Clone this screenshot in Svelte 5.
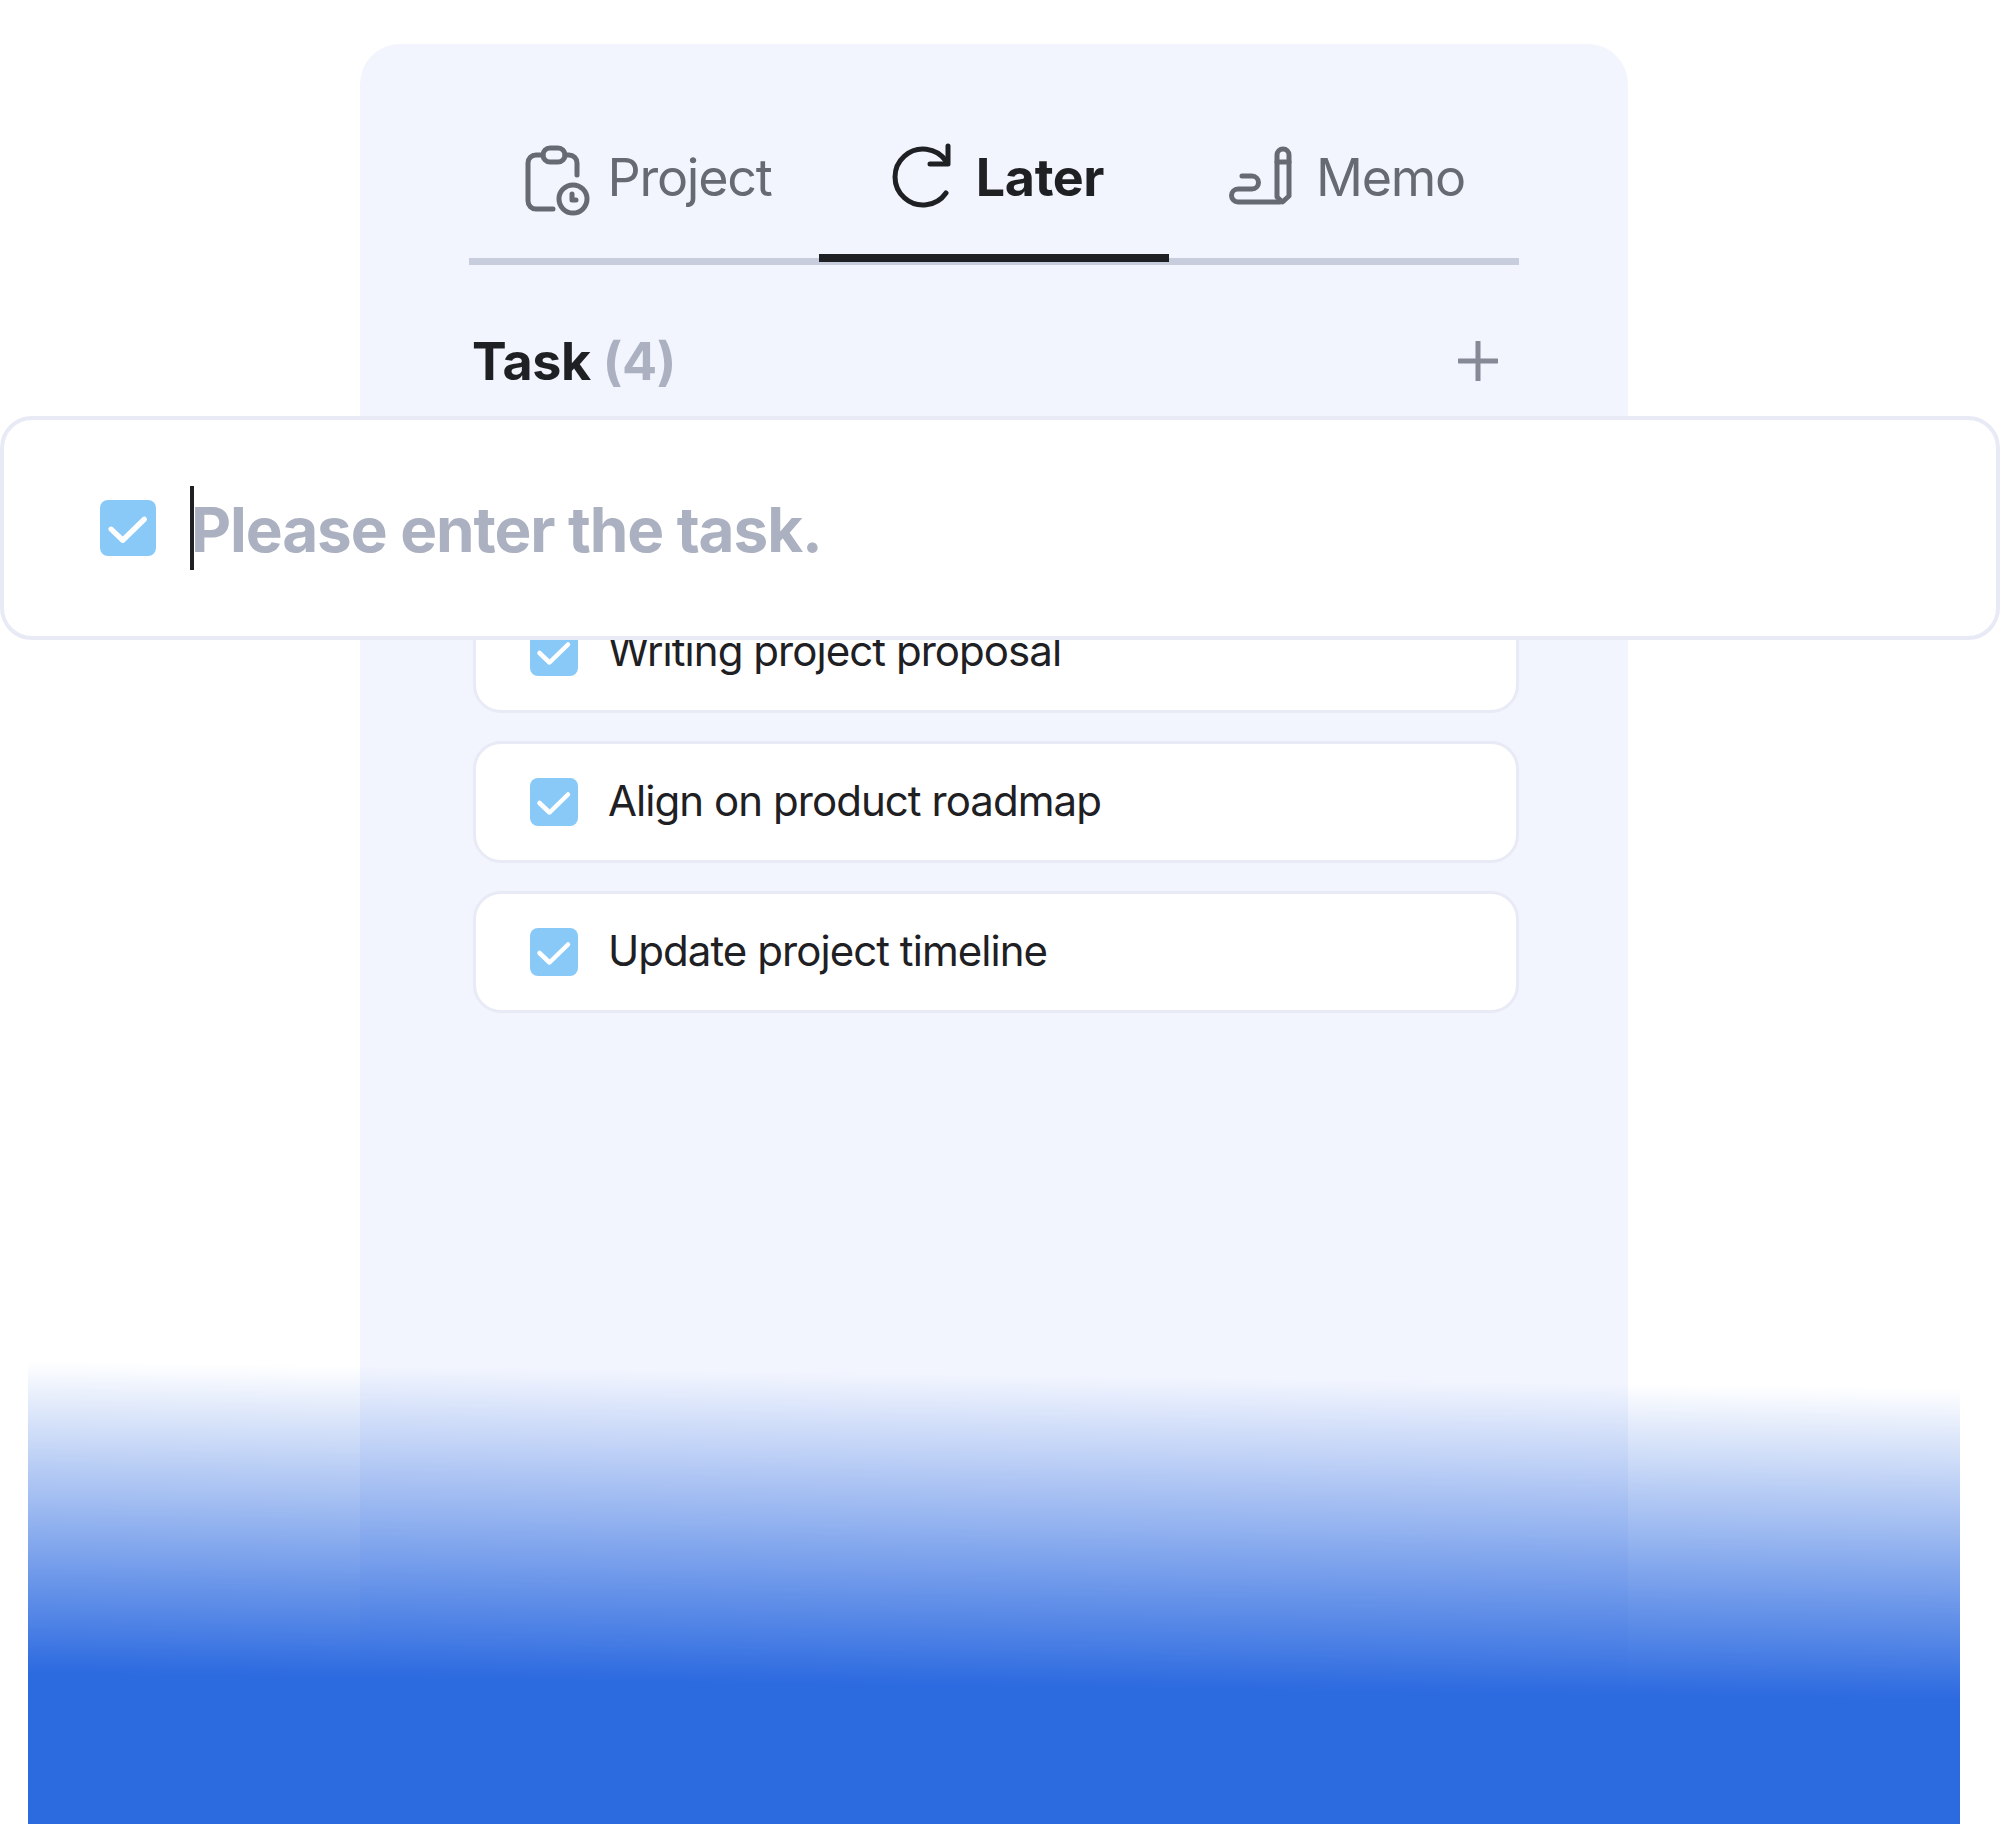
<script>
  const tabs = [
    { id: 'project', label: 'Project' },
    { id: 'later', label: 'Later', active: true },
    { id: 'memo', label: 'Memo' }
  ]
  const tasks = [
    'Writing project proposal',
    'Align on product roadmap',
    'Update project timeline'
  ]
</script>

{#snippet check(size)}
  <span class="check" style="width:{size}px;height:{size}px">
    <svg viewBox="0 0 48 48" width={size} height={size} aria-hidden="true">
      <path d="M9.5 25L19.5 34.5L38 16.5" />
    </svg>
  </span>
{/snippet}

<main class="page">
  <section class="panel">
    <nav class="tabs">
      {#each tabs as tab}
        <div class="tab {tab.id}" class:active={tab.active}>
          {#if tab.id === 'project'}
            <svg class="icon" viewBox="10 10 72 72" aria-hidden="true">
              <path d="M33 24H26a8 8 0 0 0-8 8V70a8 8 0 0 0 8 8H43" />
              <path d="M55 24h4a8 8 0 0 1 8 8V44" />
              <rect x="33" y="17" width="22" height="14" rx="7" />
              <circle cx="63" cy="68" r="14" />
              <path d="M62 63v6h4" />
            </svg>
          {:else if tab.id === 'later'}
            <svg class="icon" viewBox="0 0 72 72" aria-hidden="true">
              <path d="M59 20A28 28 0 1 0 59 52" />
              <path d="M61 5V23H43" />
            </svg>
          {:else}
            <svg class="icon" viewBox="10 10 72 72" aria-hidden="true">
              <path d="M26 45H36a6.5 6.5 0 0 1 0 13H22a6.5 6.5 0 0 0 0 13H64" />
              <path d="M61 24a6 6 0 0 1 12 0V65L66.5 71L61 66Z" />
              <path d="M61 31H73" />
            </svg>
          {/if}
          <span>{tab.label}</span>
        </div>
      {/each}
    </nav>

    <header class="task-head">
      <h2>Task <span>(4)</span></h2>
      <svg class="plus" viewBox="0 0 40 40" aria-hidden="true">
        <path d="M20 1V39M1 20H39" />
      </svg>
    </header>

    <ul class="tasks">
      {#each tasks as task}
        <li>
          {@render check(48)}
          <span class="label">{task}</span>
        </li>
      {/each}
    </ul>
  </section>

  <div class="entry">
    {@render check(56)}
    <span class="caret"></span>
    <span class="placeholder">Please enter the task.</span>
  </div>

  <div class="fade"></div>
</main>

<style>
  :global(body) {
    margin: 0;
    background: #fff;
  }

  .page {
    position: relative;
    height: 1824px;
    overflow: hidden;
    font-family: Inter, "Liberation Sans", sans-serif;
    color: #1e2024;
  }

  .panel {
    box-sizing: border-box;
    width: 1268px;
    height: 1780px;
    margin-left: 360px;
    position: relative;
    top: 44px;
    padding: 0 109px;
    background: #f2f5fe;
    border-radius: 40px 40px 0 0;
  }

  .tabs {
    display: grid;
    grid-template-columns: repeat(3, 1fr);
    height: 221px;
    border-bottom: 7px solid #c7cddc;
    box-sizing: border-box;
  }

  .tab {
    position: relative;
    display: flex;
    align-items: center;
    justify-content: center;
    gap: 16px;
    height: 214px;
    padding: 52px 0 0 3px;
    box-sizing: border-box;
    font-size: 52px;
    letter-spacing: -1.25px;
    color: #666a73;
  }

  .tab.memo {
    gap: 18px;
  }

  .tab.active {
    gap: 17px;
    font-weight: 700;
    letter-spacing: -0.4px;
    color: #1e2024;
  }

  .tab.active::after {
    content: '';
    position: absolute;
    left: 0;
    right: 0;
    bottom: -4px;
    height: 8px;
    background: #1e2024;
  }

  .icon {
    width: 72px;
    height: 72px;
    overflow: visible;
    fill: none;
    stroke: currentColor;
    stroke-width: 5;
    stroke-linecap: round;
    stroke-linejoin: round;
  }

  .task-head {
    display: flex;
    align-items: center;
    justify-content: space-between;
    height: 96px;
    margin-top: 48px;
    padding: 0 21px 0 3px;
  }

  h2 {
    margin: 0;
    font-size: 52px;
    font-weight: 700;
    letter-spacing: -0.4px;
  }

  h2 span {
    color: #abb1c0;
  }

  .plus {
    width: 40px;
    height: 40px;
    fill: none;
    stroke: #858a96;
    stroke-width: 5;
    stroke-linecap: round;
  }

  .tasks {
    list-style: none;
    margin: 182px 0 0 4px;
    padding: 0;
    display: flex;
    flex-direction: column;
    gap: 28px;
  }

  .tasks li {
    box-sizing: border-box;
    display: flex;
    align-items: center;
    gap: 30px;
    height: 122px;
    padding: 0 54px;
    background: #fff;
    border: 3px solid #e8eaf6;
    border-radius: 28px;
    font-size: 42px;
    letter-spacing: -0.95px;
  }

  .label {
    margin-top: -4px;
  }

  .check {
    flex: none;
    display: block;
    background: #89c9f8;
    border-radius: 8px;
  }

  .check svg {
    display: block;
    fill: none;
    stroke: #fff;
    stroke-width: 4.5;
    stroke-linecap: round;
    stroke-linejoin: round;
  }

  .entry {
    position: absolute;
    left: 0;
    top: 416px;
    box-sizing: border-box;
    width: 2000px;
    height: 224px;
    display: flex;
    align-items: center;
    padding-left: 96px;
    background: #fff;
    border: 4px solid #e8eaf6;
    border-radius: 32px;
  }

  .caret {
    width: 4px;
    height: 84px;
    margin-left: 34px;
    background: #1e2024;
  }

  .placeholder {
    margin: 2px 0 0 -3px;
    font-size: 62px;
    font-weight: 700;
    letter-spacing: -1.1px;
    color: #abb1c0;
  }

  .fade {
    position: absolute;
    left: 28px;
    top: 1340px;
    width: 1932px;
    height: 484px;
    background: linear-gradient(180.8deg, rgba(44, 106, 224, 0) 9.4%, #2c6ae0 70.5%);
  }
</style>
